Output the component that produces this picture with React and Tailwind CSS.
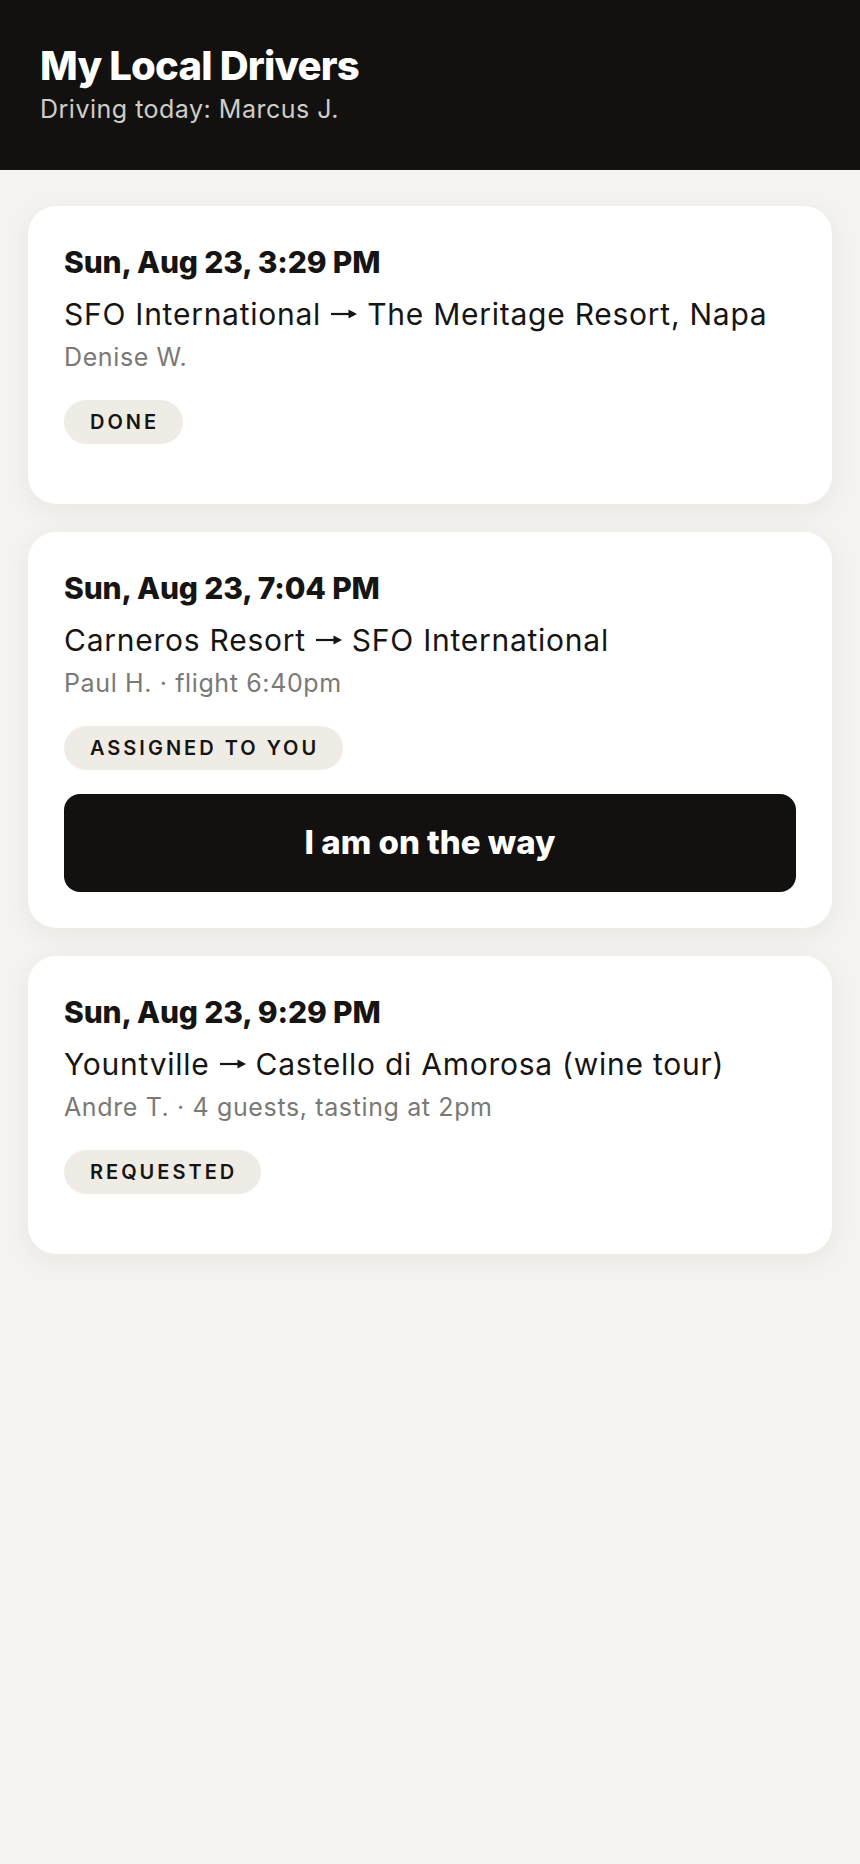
import React from "react";

const rides = [
  {
    id: 1,
    when: "Sun, Aug 23, 3:29 PM",
    from: "SFO International",
    to: "The Meritage Resort, Napa",
    meta: "Denise W.",
    status: "Done",
  },
  {
    id: 2,
    when: "Sun, Aug 23, 7:04 PM",
    from: "Carneros Resort",
    to: "SFO International",
    meta: "Paul H. · flight 6:40pm",
    status: "Assigned to you",
    action: "I am on the way",
  },
  {
    id: 3,
    when: "Sun, Aug 23, 9:29 PM",
    from: "Yountville",
    to: "Castello di Amorosa (wine tour)",
    meta: "Andre T. · 4 guests, tasting at 2pm",
    status: "Requested",
  },
];

// small solid-headed arrow between pickup and dropoff
const Arrow = () => (
  <svg width="26" height="12" viewBox="0 0 26 12" className="mx-[10px] inline-block align-[5px]">
    <path d="M0 6h19" stroke="currentColor" strokeWidth="2.2" />
    <path d="M17.5 1.5l8.5 4.5-8.5 4.5z" fill="currentColor" />
  </svg>
);

const RideCard = ({ ride }) => (
  <div className="rounded-[28px] bg-white px-9 pt-9 pb-9 shadow-[0_6px_28px_rgba(40,30,10,0.06)]">
    {/* date / time */}
    <div className="text-[30px] leading-[40px] font-extrabold tracking-[-0.005em] text-[#161513]">
      {ride.when}
    </div>
    {/* route */}
    <div className="mt-[14px] text-[30px] leading-[36px] tracking-[0.025em] text-[#161513]">
      {ride.from}
      <Arrow />
      {ride.to}
    </div>
    <div className="mt-[10px] text-[25px] leading-[31px] tracking-[0.025em] text-[#7a7976]">
      {ride.meta}
    </div>

    <div className="mt-[27px] mb-6 flex">
      <span className="inline-flex h-[44px] items-center rounded-full bg-[#efece6] pl-[26px] pr-[24px] text-[20px] font-semibold uppercase tracking-[0.15em] text-[#161513]">
        {ride.status}
      </span>
    </div>

    {ride.action && (
      <button className="flex h-[98px] w-full items-center justify-center rounded-[16px] bg-[#121110] text-[33px] font-extrabold text-white">
        {ride.action}
      </button>
    )}
  </div>
);

export default function App() {
  return (
    <div className="min-h-[1864px] bg-[#f4f3ef] font-['Inter',sans-serif]">
      {/* Header */}
      <div className="h-[170px] bg-[#121110] px-10 pt-[44px]">
        <h1 className="text-[40px] leading-[44px] font-extrabold tracking-[-0.02em] text-white">
          My Local Drivers
        </h1>
        <div className="mt-[6px] text-[25px] leading-[30px] tracking-[0.02em] text-[#cfcdc8]">
          Driving today: Marcus J.
        </div>
      </div>

      {/* Rides */}
      <div className="flex flex-col gap-[28px] px-7 pt-9">
        {rides.map((r) => (
          <RideCard key={r.id} ride={r} />
        ))}
      </div>
    </div>
  );
}
